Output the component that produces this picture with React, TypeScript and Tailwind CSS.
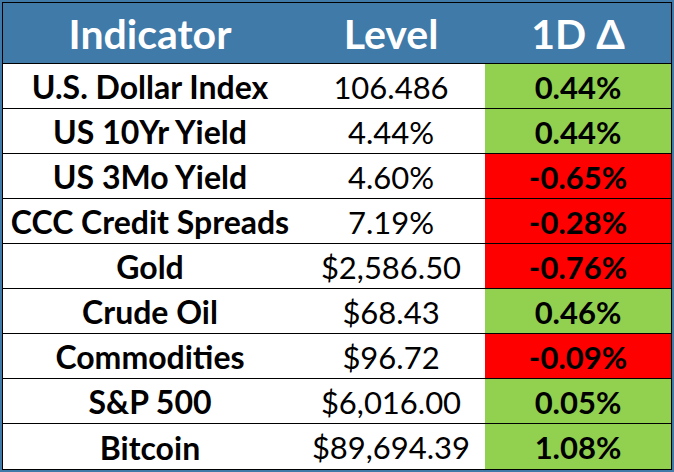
import React from "react";

type Row = { name: string; level: string; change: string; up: boolean };

const rows: Row[] = [
  { name: "U.S. Dollar Index", level: "106.486", change: "0.44%", up: true },
  { name: "US 10Yr Yield", level: "4.44%", change: "0.44%", up: true },
  { name: "US 3Mo Yield", level: "4.60%", change: "-0.65%", up: false },
  { name: "CCC Credit Spreads", level: "7.19%", change: "-0.28%", up: false },
  { name: "Gold", level: "$2,586.50", change: "-0.76%", up: false },
  { name: "Crude Oil", level: "$68.43", change: "0.46%", up: true },
  { name: "Commodities", level: "$96.72", change: "-0.09%", up: false },
  { name: "S&P 500", level: "$6,016.00", change: "0.05%", up: true },
  { name: "Bitcoin", level: "$89,694.39", change: "1.08%", up: true },
];

export default function App() {
  return (
    <div
      className="w-[674px] h-[472px] bg-[#3f7aa8] p-[2px]"
      style={{ fontFamily: "Lato, 'Open Sans', sans-serif" }}
    >
      <div className="w-full h-full border border-black bg-white flex flex-col">
        <div className="h-[61px] flex bg-[#3f7aa8] border-b border-black text-white font-bold text-[41px] leading-none">
          <div className="w-[294px] flex items-center justify-center">Indicator</div>
          <div className="w-[188px] flex items-center justify-center">Level</div>
          <div className="flex-1 flex items-center justify-center">1D Δ</div>
        </div>
        {rows.map((r, i) => (
          <div
            key={r.name}
            className={
              "h-[45px] flex text-black text-[31px] leading-none pt-[2px] " +
              (i < rows.length - 1 ? "border-b border-black" : "")
            }
          >
            <div className="w-[294px] flex items-center justify-center font-bold text-[32px]">{r.name}</div>
            <div className="w-[188px] flex items-center justify-center">{r.level}</div>
            <div
              className={
                "flex-1 flex items-center justify-center font-bold -mt-[2px] " +
                (r.up ? "bg-[#92d050]" : "bg-[#ff0000]")
              }
            >
              <span className="pt-[2px]">{r.change}</span>
            </div>
          </div>
        ))}
      </div>
    </div>
  );
}
